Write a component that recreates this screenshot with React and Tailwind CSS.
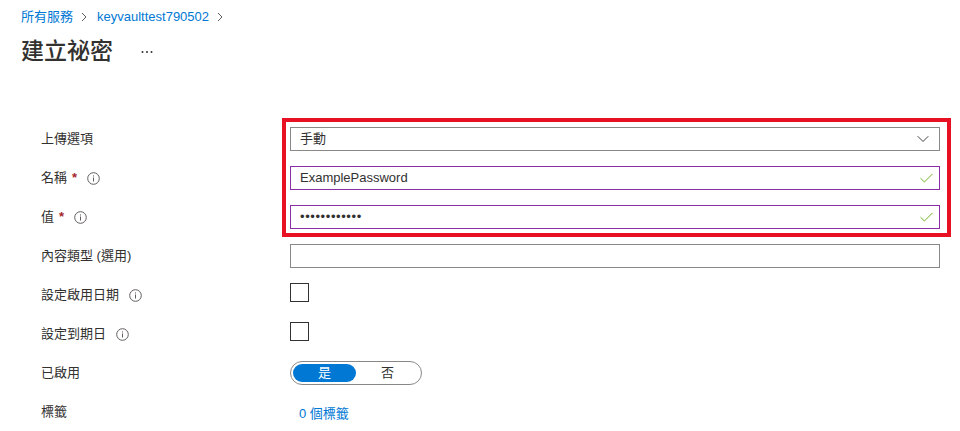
import { ChevronDown, Check } from "lucide-react";

const FONT = { fontFamily: '"Liberation Sans", "Noto Sans CJK TC", sans-serif' };

function InfoIcon() {
    return (
        <svg width="13" height="13" viewBox="0 0 13 13" className="shrink-0">
            <circle cx="6.5" cy="6.5" r="5.8" fill="none" stroke="#605e5c" strokeWidth="1" />
            <rect x="6" y="5.5" width="1" height="4" fill="#605e5c" />
            <rect x="6" y="3.4" width="1" height="1.1" fill="#605e5c" />
        </svg>
    );
}

function Crumb() {
    return (
        <svg width="6" height="10" viewBox="0 0 6 10" className="mx-[8px]">
            <path d="M1 1 L5 5 L1 9" fill="none" stroke="#605e5c" strokeWidth="1" />
        </svg>
    );
}

function Row({ label, required, info, children, className = "items-center" }) {
    return (
        <div className={`flex h-6 ${className}`}>
            <div className="flex w-[290px] shrink-0 items-center self-center pl-[41px] text-[13px] text-[#323130]">
                <span>{label}</span>
                {required && <span className="ml-[5px] text-[13px] font-bold text-[#a4262c]">*</span>}
                {info && (
                    <span className="ml-[10px] flex">
                        <InfoIcon />
                    </span>
                )}
            </div>
            <div className="w-[650px]">{children}</div>
        </div>
    );
}

function TextBox({ value, valid, purple }) {
    return (
        <div
            className={`flex h-6 items-center justify-between border bg-white pl-[9px] pr-[4px] text-[13px] text-[#323130] ${
                purple ? "border-[#8c2ea8]" : "border-[#8a8886]"
            }`}
        >
            <span className={valid === "pw" ? "tracking-[0.6px]" : ""}>{value}</span>
            {valid && <Check size={17} strokeWidth={1.2} color="#57a300" />}
        </div>
    );
}

export default function App() {
    return (
        <div className="relative h-[431px] w-[960px] overflow-hidden bg-white pt-[8px]" style={FONT}>
            <div className="flex h-[18px] items-center pl-[21px] text-[13px] leading-[18px] text-[#0078d4]">
                <span>所有服務</span>
                <Crumb />
                <span className="ml-[2px]">keyvaulttest790502</span>
                <Crumb />
            </div>

            <div className="mt-[9px] flex h-[32px] items-center pl-[21px]">
                <h1 className="text-[23px] font-medium leading-[32px] text-[#323130]">建立祕密</h1>
                <svg width="12" height="4" viewBox="0 0 12 4" className="ml-[28px] mt-[2px]">
                    <circle cx="1.5" cy="2" r="1" fill="#323130" />
                    <circle cx="6" cy="2" r="1" fill="#323130" />
                    <circle cx="10.5" cy="2" r="1" fill="#323130" />
                </svg>
            </div>

            <div className="mt-[60px] flex flex-col gap-[15px]">
                <Row label="上傳選項">
                    <div className="flex h-6 items-center justify-between border border-[#8a8886] bg-white pl-[9px] pr-[6px] text-[13px] text-[#323130]">
                        <span>手動</span>
                        <ChevronDown size={20} strokeWidth={1.1} color="#323130" />
                    </div>
                </Row>
                <Row label="名稱" required info>
                    <TextBox value="ExamplePassword" valid="ok" purple />
                </Row>
                <Row label="值" required info>
                    <TextBox value="••••••••••••" valid="pw" purple />
                </Row>
                <Row label="內容類型 (選用)">
                    <TextBox value="" />
                </Row>
                <Row label="設定啟用日期" info className="items-start">
                    <div className="h-[19px] w-[19px] border border-[#323130] bg-white" />
                </Row>
                <Row label="設定到期日" info className="items-start">
                    <div className="h-[19px] w-[19px] border border-[#323130] bg-white" />
                </Row>
                <Row label="已啟用">
                    <div className="flex h-6 w-[132px] items-center rounded-full border border-[#8a8886] p-[2px] text-[13px]">
                        <div className="flex h-[18px] w-[63px] items-center justify-center rounded-full bg-[#0078d4] text-white">
                            是
                        </div>
                        <div className="flex flex-1 items-center justify-center text-[#323130]">否</div>
                    </div>
                </Row>
                <Row label="標籤">
                    <div className="pl-[9px] pt-[4px] text-[13px] text-[#0078d4]">0 個標籤</div>
                </Row>
            </div>

            <div className="absolute left-[282px] top-[118px] h-[119px] w-[669px] border-4 border-[#e81123]" />
        </div>
    );
}
